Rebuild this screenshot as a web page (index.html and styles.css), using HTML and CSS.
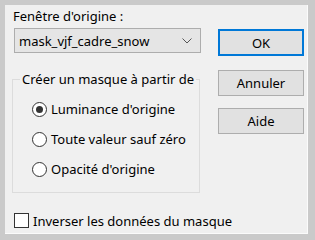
FILE: index.html
```html
<!DOCTYPE html>
<html lang="fr">
<head>
    <meta charset="UTF-8">
    <title>Créer un masque</title>
    <link rel="stylesheet" href="styles.css">
</head>
<body>
    <div class="dialog">
        <div class="main">
            <div class="left">
                <div class="label">Fenêtre d'origine :</div>
                <div class="combo">
                    <span>mask_vjf_cadre_snow</span>
                    <svg class="chevron" width="10" height="6" viewBox="0 0 10 6">
                        <polyline points="0.5,0.5 5,5 9.5,0.5" fill="none" stroke="#555" stroke-width="1"/>
                    </svg>
                </div>
                <fieldset class="group">
                    <legend>Créer un masque à partir de</legend>
                    <div class="option"><span class="radio checked"></span>Luminance d'origine</div>
                    <div class="option"><span class="radio"></span>Toute valeur sauf zéro</div>
                    <div class="option"><span class="radio"></span>Opacité d'origine</div>
                </fieldset>
            </div>
            <div class="right">
                <button class="btn btn-default">OK</button>
                <button class="btn btn-cancel">Annuler</button>
                <button class="btn btn-help">Aide</button>
            </div>
        </div>
        <div class="footer">
            <span class="checkbox"></span>Inverser les données du masque
        </div>
    </div>
</body>
</html>
```

FILE: styles.css
```css
body {
    margin: 0;
    font-family: "Noto Sans", sans-serif;
    font-size: 13px;
    color: #000;
}
.dialog {
    width: 315px;
    height: 240px;
    box-sizing: border-box;
    border-style: solid;
    border-color: #cacaca;
    border-width: 5px 7px 6px 5px;
    background-color: #f0f0f0;
    box-shadow: inset -1px -1px 0 #fbfbfb;
    display: flex;
    flex-direction: column;
}
.main {
    display: flex;
    padding: 3px 0 0 7px;
}
.left {
    width: 189px;
}
.label {
    margin-left: 1px;
    line-height: 17px;
}
.combo {
    margin: 3px 0 0 2px;
    width: 187px;
    height: 25px;
    box-sizing: border-box;
    border: 1px solid #adadad;
    background-color: #e5e5e5;
    display: flex;
    align-items: center;
    justify-content: space-between;
    padding: 0 8px 0 4px;
}
.group {
    margin: 18px 0 0 0;
    width: 188px;
    box-sizing: border-box;
    border: 1px solid #dcdcdc;
    padding: 7px 0 8px 0;
}
.group legend {
    margin-left: 7px;
    padding: 0 2px;
    line-height: 16px;
    white-space: nowrap;
}
.option {
    display: flex;
    align-items: center;
    height: 30px;
    padding-left: 19px;
}
.radio {
    width: 15px;
    height: 15px;
    box-sizing: border-box;
    border: 1px solid #333;
    border-radius: 50%;
    background-color: #fff;
    margin-right: 4px;
    display: flex;
    align-items: center;
    justify-content: center;
}
.radio.checked::after {
    content: "";
    width: 7px;
    height: 7px;
    border-radius: 50%;
    background-color: #333;
}
.right {
    margin-left: 17px;
    display: flex;
    flex-direction: column;
}
.btn {
    width: 86px;
    height: 26px;
    box-sizing: border-box;
    border: 1px solid #adadad;
    background-color: #e1e1e1;
    font-family: inherit;
    font-size: 13px;
    color: #000;
    padding: 0;
}
.btn-default {
    margin-top: 21px;
    height: 27px;
    border: 2px solid #0078d7;
}
.btn-cancel {
    margin-top: 14px;
}
.btn-help {
    margin-top: 12px;
}
.footer {
    margin-top: 20px;
    padding-left: 9px;
    display: flex;
    align-items: center;
    height: 15px;
}
.checkbox {
    width: 15px;
    height: 15px;
    box-sizing: border-box;
    border: 1px solid #333;
    background-color: #fff;
    margin-right: 4px;
}
```
